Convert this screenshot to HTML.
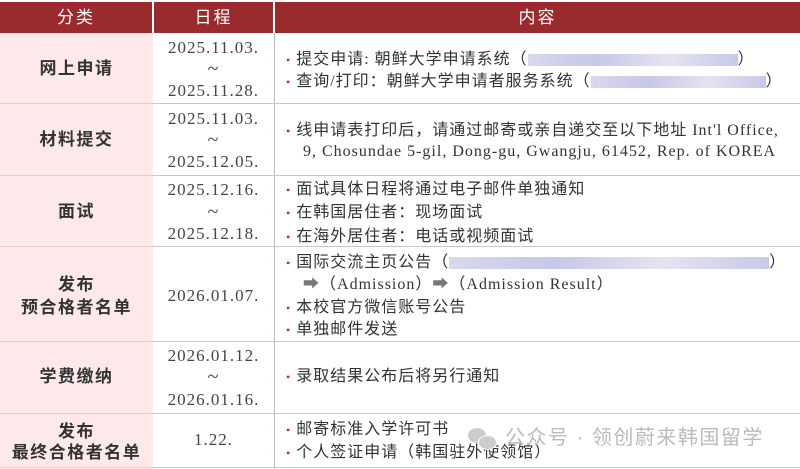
<!DOCTYPE html>
<html><head><meta charset="utf-8"><style>
body{margin:0;width:800px;height:469px;overflow:hidden;background:#fff;position:relative;font-family:"Liberation Serif","Noto Serif CJK SC",serif;color:#333}
.a{position:absolute;line-height:20px;white-space:nowrap}
.c1{left:0;width:153px;text-align:center;font-family:"Liberation Sans","Noto Sans CJK SC",sans-serif;font-size:17px;font-weight:bold;color:#333;letter-spacing:1.5px}
.c2{left:153px;width:121px;text-align:center;font-size:17px;color:#444;letter-spacing:1px}
.c2.t{font-size:20px}
.c3{left:286px;font-size:16px;letter-spacing:1px;font-family:"Liberation Serif","Noto Sans CJK SC",serif;color:#333}
.c3 b{color:#d0202a;font-weight:normal;margin-right:5px;font-size:12px}
.h{position:absolute;top:2px;height:31px;background:#9b2a2e;color:#fff;font-family:"Liberation Sans","Noto Sans CJK SC",sans-serif;font-size:17px;letter-spacing:2px;line-height:31px;text-align:center}
.hl{position:absolute;height:1px;background:#c8c8c8;left:153px;width:647px}
.pl{position:absolute;height:1px;background:#f5c6ca;left:0;width:153px}
.blur{display:inline-block;height:12px;background:linear-gradient(90deg,#d8d8ee,#c7c7e8,#e4e4f0,#c8c8ea);vertical-align:middle}
</style></head><body>
<div style="position:absolute;left:0;top:33px;width:153px;height:436px;background:#fde9ea"></div>
<div class="h" style="left:0;width:152px">分类</div>
<div class="h" style="left:154px;width:119px">日程</div>
<div class="h" style="left:275px;width:525px">内容</div>
<div style="position:absolute;left:274px;top:33px;width:1px;height:436px;background:#bbb"></div>
<div class="hl" style="top:103px"></div><div class="pl" style="top:103px"></div>
<div class="hl" style="top:175px"></div><div class="pl" style="top:175px"></div>
<div class="hl" style="top:246px"></div><div class="pl" style="top:246px"></div>
<div class="hl" style="top:341px"></div><div class="pl" style="top:341px"></div>
<div class="hl" style="top:413px"></div><div class="pl" style="top:413px"></div>
<div class="hl" style="top:467px"></div><div class="pl" style="top:467px"></div>

<div class="a c1" style="top:59px">网上申请</div>
<div class="a c2" style="top:38px">2025.11.03.</div>
<div class="a c2 t" style="top:59px">~</div>
<div class="a c2" style="top:81px">2025.11.28.</div>
<div class="a c3" style="top:50px"><b>•</b>提交申请: 朝鲜大学申请系统（<span class="blur" style="width:210px"></span>）</div>
<div class="a c3" style="top:72px"><b>•</b>查询/打印：朝鲜大学申请者服务系统（<span class="blur" style="width:175px"></span>）</div>

<div class="a c1" style="top:130px">材料提交</div>
<div class="a c2" style="top:109px">2025.11.03.</div>
<div class="a c2 t" style="top:130px">~</div>
<div class="a c2" style="top:152px">2025.12.05.</div>
<div class="a c3" style="top:121px"><b>•</b>线申请表打印后，请通过邮寄或亲自递交至以下地址 Int'l Office,</div>
<div class="a c3" style="top:142px;left:303px">9, Chosundae 5-gil, Dong-gu, Gwangju, 61452, Rep. of KOREA</div>

<div class="a c1" style="top:202px">面试</div>
<div class="a c2" style="top:180px">2025.12.16.</div>
<div class="a c2 t" style="top:202px">~</div>
<div class="a c2" style="top:224px">2025.12.18.</div>
<div class="a c3" style="top:180px"><b>•</b>面试具体日程将通过电子邮件单独通知</div>
<div class="a c3" style="top:203px"><b>•</b>在韩国居住者：现场面试</div>
<div class="a c3" style="top:227px"><b>•</b>在海外居住者：电话或视频面试</div>

<div class="a c1" style="top:275px">发布</div>
<div class="a c1" style="top:298px">预合格者名单</div>
<div class="a c2" style="top:286px">2026.01.07.</div>
<div class="a c3" style="top:253px"><b>•</b>国际交流主页公告（<span class="blur" style="width:320px"></span>）</div>
<div class="a c3" style="top:275px;left:303px"><span style="color:#777">➡</span>（Admission）<span style="color:#777">➡</span>（Admission Result）</div>
<div class="a c3" style="top:298px"><b>•</b>本校官方微信账号公告</div>
<div class="a c3" style="top:320px"><b>•</b>单独邮件发送</div>

<div class="a c1" style="top:367px">学费缴纳</div>
<div class="a c2" style="top:346px">2026.01.12.</div>
<div class="a c2 t" style="top:367px">~</div>
<div class="a c2" style="top:390px">2026.01.16.</div>
<div class="a c3" style="top:367px"><b>•</b>录取结果公布后将另行通知</div>

<div class="a c1" style="top:422px">发布</div>
<div class="a c1" style="top:443px">最终合格者名单</div>
<div class="a c2" style="top:430px">1.22.</div>
<div class="a c3" style="top:420px"><b>•</b>邮寄标准入学许可书</div>
<div class="a c3" style="top:443px"><b>•</b>个人签证申请（韩国驻外使领馆）</div>
<div class="a" style="left:468px;top:424px;font-family:'Liberation Sans','Noto Sans CJK SC',sans-serif;font-size:20px;letter-spacing:1.5px;color:#bbb;line-height:28px">
<span style="display:inline-block;width:30px;height:24px;vertical-align:middle;position:relative"><span style="position:absolute;left:0;top:1px;width:18px;height:15px;border-radius:50%;background:#ccc"></span><span style="position:absolute;left:10px;top:8px;width:17px;height:13px;border-radius:50%;background:#ccc;border:1px solid #fff"></span></span> 公众号 · 领创蔚来韩国留学</div>
</body></html>
